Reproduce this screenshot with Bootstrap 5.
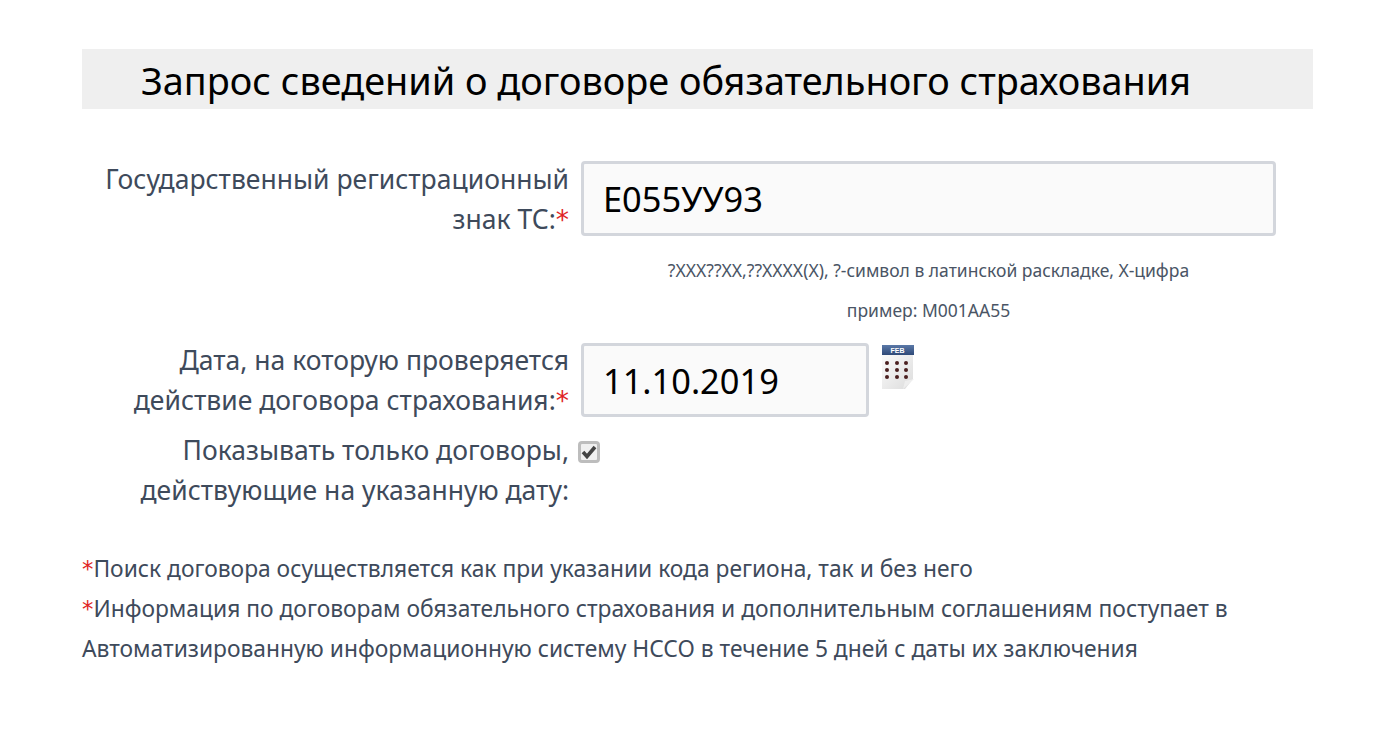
<!DOCTYPE html>
<html lang="ru"><head><meta charset="utf-8"><title>Запрос</title>
<link href="https://cdn.jsdelivr.net/npm/bootstrap@5.3.0/dist/css/bootstrap.min.css" rel="stylesheet">
<style>
body{font-family:"Noto Sans","Open Sans","DejaVu Sans",sans-serif;color:#3e4a5b;background:#fff;overflow:hidden}
.pg{margin:0 87px 0 82px;padding-top:49px}
.ttl{background:#efefef;height:60px;margin:0 0 51px;padding-left:59px;font-size:37.85px;line-height:64px;color:#000;font-weight:400}
.frow{display:flex;align-items:flex-start}
.lbl{width:487px;text-align:right;font-size:26.5px;line-height:40px;margin:-1px 0 0;flex:none}
.req{color:#e02525;font-family:"DejaVu Sans",sans-serif;line-height:0}
.fld{margin:1px 0 0 12px;border:3px solid #d3d6dc;border-radius:4px;background:#fafafa;height:75px;font-size:34.4px;color:#000;padding:0 19px;box-shadow:none}
.w1{width:695px}.w2{width:288px;height:74px}
.hnt{margin:0 0 0 499px;width:695px;text-align:center;font-size:17.5px;line-height:40px;color:#4a5565}
.h1t{margin-top:11px}
.r2{margin-top:12px}
.r2 .lbl{margin-top:-2px}
.r3{margin-top:11px}
.cal{margin:3px 0 0 12px;flex:none}
.chk{margin:0;width:22px;height:22px;appearance:none;border:3px solid #bdbdbd;border-radius:4px;background:#f0f0f0;display:block}
.chkw{position:relative;flex:none;margin:10px 0 0 9px;width:22px;height:22px}
.chkw svg{position:absolute;left:3px;top:4px}
.nts{margin-top:39px;font-size:22.8px;line-height:40px}
.nts p{margin:0}
</style></head><body>
<div class="pg">
<h1 class="ttl">Запрос сведений о договоре обязательного страхования</h1>
<form>
<div class="frow"><label class="lbl">Государственный регистрационный знак ТС:<span class="req">*</span></label><input class="fld w1 form-control-plaintext" value="Е055УУ93"></div>
<p class="hnt h1t mb-0">?ХХХ??ХХ,??ХХХХ(Х), ?-символ в латинской раскладке, Х-цифра</p>
<p class="hnt mb-0">пример: М001АА55</p>
<div class="frow r2"><label class="lbl">Дата, на которую проверяется действие договора страхования:<span class="req">*</span></label><input class="fld w2 form-control-plaintext" value="11.10.2019">
<svg class="cal" width="33" height="45" viewBox="0 0 33 45"><defs><linearGradient id="g" x1="0" y1="0" x2="0" y2="1"><stop offset="0" stop-color="#5b79a8"/><stop offset="1" stop-color="#2f4a78"/></linearGradient><linearGradient id="p" x1="0" y1="0" x2="1" y2="1"><stop offset="0" stop-color="#fbfbfb"/><stop offset="1" stop-color="#dcdcdc"/></linearGradient></defs>
<path d="M1 10H32V34L24 44H1Z" fill="url(#p)"/><rect x="1" y="0" width="32" height="10" fill="url(#g)"/><text x="16.5" y="8" text-anchor="middle" font-size="7" font-weight="700" fill="#fff" font-family="Liberation Sans">FEB</text>
<g fill="#4a1f1f"><circle cx="6" cy="18" r="2"/><circle cx="16" cy="18" r="2"/><circle cx="25" cy="18" r="2"/><circle cx="6" cy="25" r="2"/><circle cx="16" cy="25" r="2"/><circle cx="25" cy="25" r="2"/><circle cx="6" cy="32" r="2"/><circle cx="16" cy="32" r="2"/><circle cx="25" cy="32" r="2"/></g><path d="M22 44L33 34L24 36Z" fill="#eee"/></svg></div>
<div class="frow r3"><label class="lbl">Показывать только договоры, действующие на указанную дату:</label><span class="chkw"><input type="checkbox" class="chk" checked><svg width="16" height="14" viewBox="0 0 16 14"><path d="M2 7L6 11.5L14 2" fill="none" stroke="#444" stroke-width="3.6"/></svg></span></div>
</form>
<div class="nts"><p><span class="req">*</span>Поиск договора осуществляется как при указании кода региона, так и без него</p><p><span class="req">*</span>Информация по договорам обязательного страхования и дополнительным соглашениям поступает в Автоматизированную информационную систему НССО в течение 5 дней с даты их заключения</p></div>
</div>
</body></html>
